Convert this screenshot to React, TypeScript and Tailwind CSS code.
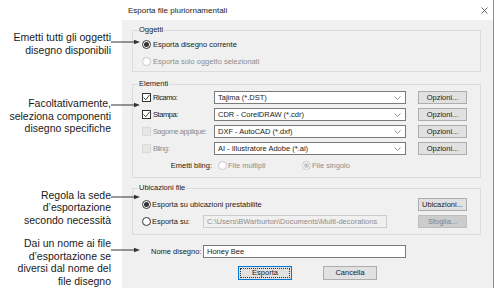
import React from "react";

// callout arrow pointing right into the dialog
function Arrow({ className }: { className: string }) {
  return (
    <svg className={"absolute " + className} width="30" height="6" viewBox="0 0 30 6">
      <line x1="0" y1="3" x2="25" y2="3" stroke="#333" strokeWidth="1" />
      <path d="M23 0.8 L29 3 L23 5.2 Z" fill="#333" />
    </svg>
  );
}

function Radio({ checked, disabled }: { checked?: boolean; disabled?: boolean }) {
  return (
    <span
      className={
        "flex h-[9px] w-[9px] shrink-0 items-center justify-center rounded-full border bg-white " +
        (disabled ? "border-[#c8c8c8]" : "border-[#333]")
      }
    >
      {checked && (
        <span className={"h-[5px] w-[5px] rounded-full " + (disabled ? "bg-[#c8c8c8]" : "bg-[#333]")} />
      )}
    </span>
  );
}

function Check({ checked, disabled }: { checked?: boolean; disabled?: boolean }) {
  if (disabled) {
    return <span className="h-[9px] w-[9px] shrink-0 border border-[#dadada] bg-[#e6e6e6]" />;
  }
  return (
    <span className="flex h-[9px] w-[9px] shrink-0 items-center justify-center border border-[#333] bg-white">
      {checked && (
        <svg width="7" height="7" viewBox="0 0 7 7">
          <path d="M0.5 3.5 L2.8 5.8 L6.6 0.8" fill="none" stroke="#333" strokeWidth="0.9" />
        </svg>
      )}
    </span>
  );
}

function Combo({ value }: { value: string }) {
  return (
    <div className="flex h-[13px] w-[192px] shrink-0 items-center justify-between border border-[#7a7a7a] bg-white pl-[3px] pr-[4px]">
      <span>{value}</span>
      <svg width="7" height="4" viewBox="0 0 7 4">
        <path d="M0.5 0.5 L3.5 3.5 L6.5 0.5" fill="none" stroke="#7a7a7a" strokeWidth="0.8" />
      </svg>
    </div>
  );
}

function Btn({ label, disabled }: { label: string; disabled?: boolean }) {
  return (
    <div
      className={
        "ml-auto flex h-[13px] w-[49px] shrink-0 items-center justify-center border " +
        (disabled ? "border-[#bfbfbf] bg-[#cccccc] text-[#838383]" : "border-[#adadad] bg-[#e1e1e1]")
      }
    >
      {label}
    </div>
  );
}

function Group({ title, className, children }: { title: string; className?: string; children: React.ReactNode }) {
  return (
    <fieldset className={"border border-[#dcdcdc] " + (className || "")}>
      <legend className="ml-[5px] px-[1px] leading-[10px]">{title}</legend>
      {children}
    </fieldset>
  );
}

const elementi = [
  { label: "Ricamo:", value: "Tajima (*.DST)", on: true },
  { label: "Stampa:", value: "CDR - CorelDRAW (*.cdr)", on: true },
  { label: "Sagome appliqué:", value: "DXF - AutoCAD (*.dxf)", on: false },
  { label: "Bling:", value: "AI - Illustratore Adobe (*.ai)", on: false },
];

export default function App() {
  return (
    <div className="relative flex h-[306px] w-[495px] overflow-hidden bg-white text-[#1a1a1a]">
      {/* annotations */}
      <div className="flex w-[122px] shrink-0 flex-col items-end pr-[11px] text-right font-['Liberation_Sans',Arial,sans-serif] text-[10.5px] leading-[12.5px] whitespace-nowrap">
        <div className="mt-[31px]">
          Emetti tutti gli oggetti
          <br />
          disegno disponibili
        </div>
        <div className="mt-[41px]">
          Facoltativamente,
          <br />
          seleziona componenti
          <br />
          disegno specifiche
        </div>
        <div className="mt-[54px]">
          Regola la sede
          <br />
          d’esportazione
          <br />
          secondo necessità
        </div>
        <div className="mt-[11px]">
          Dai un nome ai file
          <br />
          d’esportazione se
          <br />
          diversi dal nome del
          <br />
          file disegno
        </div>
      </div>
      <Arrow className="left-[111px] top-[39px]" />
      <Arrow className="left-[111px] top-[102px]" />
      <Arrow className="left-[111px] top-[194px]" />
      <Arrow className="left-[111px] top-[247px]" />

      {/* dialog */}
      <div className="flex h-[288px] w-[372px] shrink-0 flex-col whitespace-nowrap border-r border-[#8c8c8c] font-['Liberation_Sans',Arial,sans-serif] text-[7.5px] leading-[10px]">
        <div className="flex h-[20px] shrink-0 items-center justify-between bg-white pl-[6px] pr-[5px] pt-[1px] text-[8px]">
          <span>Esporta file pluriornamentali</span>
          <svg width="7" height="7" viewBox="0 0 7 7">
            <path d="M0.5 0.5 L6.5 6.5 M6.5 0.5 L0.5 6.5" stroke="#555" strokeWidth="0.9" />
          </svg>
        </div>

        <div className="flex flex-1 flex-col bg-[#f0f0f0] pl-[10px] pr-[12px] pt-[5px]">
          <Group title="Oggetti">
            <div className="flex flex-col pb-[1px] pl-[9px] pt-[1px]">
              <div className="flex h-[17px] items-center gap-[2px]">
                <Radio checked />
                <span>Esporta disegno corrente</span>
              </div>
              <div className="flex h-[17px] items-center gap-[2px] text-[#8d8d8d]">
                <Radio disabled />
                <span>Esporta solo oggetto selezionati</span>
              </div>
            </div>
          </Group>

          <Group title="Elementi" className="mt-[7px]">
            <div className="flex flex-col pb-[3px] pl-[9px] pr-[13px]">
              {elementi.map((r) => (
                <div key={r.label} className="flex h-[17px] items-center">
                  <div className={"flex w-[72px] shrink-0 items-center gap-[2px] " + (r.on ? "" : "text-[#8d8d8d]")}>
                    <Check checked={r.on} disabled={!r.on} />
                    <span className="tracking-[-0.45px]">{r.label}</span>
                  </div>
                  <Combo value={r.value} />
                  <Btn label="Opzioni..." />
                </div>
              ))}
              <div className="flex h-[17px] items-center">
                <div className="w-[72px] shrink-0 pr-[2px] text-right">Emetti bling:</div>
                <div className="ml-[4px] flex w-[84px] shrink-0 items-center gap-[1px] text-[#8d8d8d]">
                  <Radio disabled />
                  <span>File multipli</span>
                </div>
                <div className="flex items-center gap-[1px] text-[#8d8d8d]">
                  <Radio checked disabled />
                  <span>File singolo</span>
                </div>
              </div>
            </div>
          </Group>

          <Group title="Ubicazioni file" className="mt-[5px]">
            <div className="flex flex-col pb-[4px] pl-[9px] pr-[13px] pt-[3px]">
              <div className="flex h-[17px] items-center">
                <div className="flex items-center gap-[1px]">
                  <Radio checked />
                  <span>Esporta su ubicazioni prestabilite</span>
                </div>
                <Btn label="Ubicazioni..." />
              </div>
              <div className="flex h-[17px] items-center">
                <div className="flex w-[61px] shrink-0 items-center gap-[1px]">
                  <Radio />
                  <span>Esporta su:</span>
                </div>
                <div className="flex h-[13px] w-[184px] shrink-0 items-center overflow-hidden border border-[#cccccc] bg-[#f0f0f0] pl-[3px] text-[#8d8d8d]">
                  C:\Users\BWarburton\Documents\Multi-decorations
                </div>
                <Btn label="Sfoglia..." disabled />
              </div>
            </div>
          </Group>

          <div className="mt-[10px] flex h-[13px] items-center pl-[19px]">
            <span className="w-[52px] shrink-0">Nome disegno:</span>
            <div className="flex h-[13px] w-[203px] shrink-0 items-center border border-[#7a7a7a] bg-white pl-[3px]">Honey Bee</div>
          </div>

          <div className="mt-[8px] flex items-center pl-[106px]">
            <div className="flex h-[14px] w-[54px] items-center justify-center border border-[#0078d7] bg-[#e1e1e1] p-[1px]">
              <div className="flex h-full w-full items-center justify-center outline outline-1 outline-dotted outline-[#333] -outline-offset-1">
                Esporta
              </div>
            </div>
            <div className="ml-[31px] flex h-[14px] w-[54px] items-center justify-center border border-[#adadad] bg-[#e1e1e1]">
              Cancella
            </div>
          </div>
        </div>
      </div>
    </div>
  );
}
